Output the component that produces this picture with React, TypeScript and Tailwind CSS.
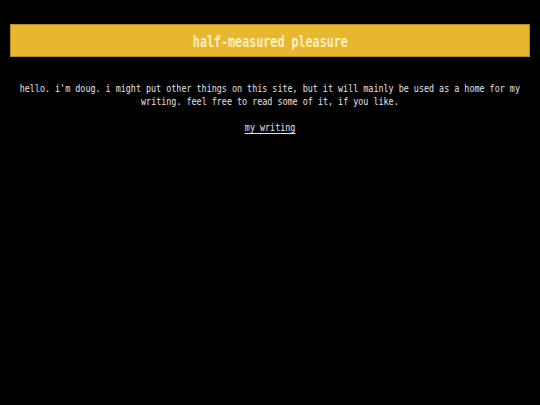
const font = { fontFamily: '"DejaVu Sans Mono", "Liberation Mono", monospace' };

const intro = [
  "hello. i'm doug. i might put other things on this site, but it will mainly be used as a home for my",
  "writing. feel free to read some of it, if you like.",
];

const App = () => {
  return (
    <div className="min-h-[405px] bg-black px-[10px] pt-[24px]" style={font}>
      <header className="flex h-[33px] items-center justify-center border border-[#b58d22] bg-[#e8b730] pt-[3px]">
        <h1 className="origin-center scale-x-[0.78] whitespace-nowrap text-[15px] font-bold leading-none text-[#fdf0c4]">
          half-measured pleasure
        </h1>
      </header>

      <main className="pt-[25px] text-[11px] leading-[13px] text-[#e4e4e4]">
        {intro.map((line) => (
          <div key={line} className="flex justify-center">
            <p className="origin-center shrink-0 scale-x-[0.763] whitespace-nowrap">{line}</p>
          </div>
        ))}
        <div className="mt-[13px] flex justify-center">
          <a
            href="#"
            className="origin-center scale-x-[0.763] whitespace-nowrap text-[#e4e4e4] underline underline-offset-2"
          >
            my writing
          </a>
        </div>
      </main>
    </div>
  );
};

export default App;
